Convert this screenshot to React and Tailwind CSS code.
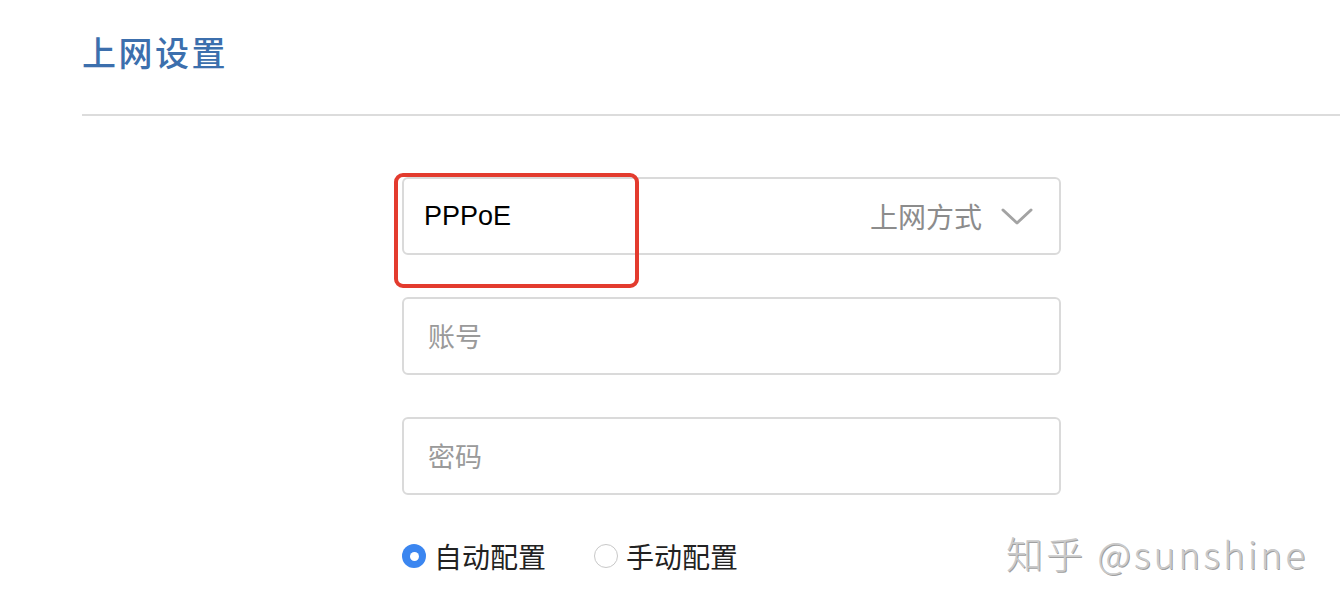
import React from "react";

const Field = ({ children }) => (
  <div className="h-[78px] w-[659px] rounded-[6px] border-2 border-[#dadada] bg-white flex items-center px-[20px]">
    {children}
  </div>
);

const App = () => {
  return (
    <div className="relative w-[1340px] h-[604px] overflow-hidden bg-white font-['Liberation_Sans','Noto_Sans_CJK_SC',sans-serif]">
      <div className="pl-[82px] pt-[28px] h-[114px]">
        <h1 className="text-[34px] leading-[48px] text-[#3c6fad] font-['Noto_Sans_CJK_SC',sans-serif] font-medium tracking-[2.5px]">
          上网设置
        </h1>
      </div>
      <div className="ml-[82px] h-[2px] bg-[#dcdcdc]" />

      <div className="ml-[402px] mt-[61px] flex flex-col gap-[42px]">
        <div className="relative">
          <Field>
            <span className="text-[27px] text-black font-['Liberation_Sans',sans-serif]">PPPoE</span>
            <span className="ml-auto text-[28px] text-[#8c8c8c] font-['Noto_Sans_CJK_SC',sans-serif]">
              上网方式
            </span>
            <svg className="ml-[18px] mr-[5px]" width="34" height="22" viewBox="0 0 34 22" fill="none">
              <path d="M3 5 L17 18 L31 5" stroke="#a3a3a3" strokeWidth="3" strokeLinecap="round" strokeLinejoin="round" />
            </svg>
          </Field>
          <div className="absolute left-[-8px] top-[-4px] w-[245px] h-[115px] rounded-[9px] border-[4px] border-[#e33b2e]" />
        </div>
        <Field>
          <span className="text-[27px] text-[#9a9a9a] font-['Noto_Sans_CJK_SC',sans-serif] ml-[4px]">账号</span>
        </Field>
        <Field>
          <span className="text-[27px] text-[#9a9a9a] font-['Noto_Sans_CJK_SC',sans-serif] ml-[4px]">密码</span>
        </Field>
      </div>

      <div className="ml-[402px] mt-[40px] flex items-center font-['Noto_Sans_CJK_SC',sans-serif] text-[28px] text-[#222]">
        <span className="w-[24px] h-[24px] rounded-full bg-[#3b86f0] flex items-center justify-center">
          <span className="w-[9px] h-[9px] rounded-full bg-white" />
        </span>
        <span className="ml-[8px]">自动配置</span>
        <span className="ml-[48px] w-[24px] h-[24px] rounded-full border border-[#c8c8c8] bg-white" />
        <span className="ml-[8px]">手动配置</span>
      </div>

      <div className="absolute left-[1006px] top-[526px] text-[37px] text-[#cacaca] font-['Noto_Sans_CJK_SC',sans-serif] font-light [text-shadow:1px_1px_0_#a0a0a0] tracking-[3px]">
        知乎 @sunshine
      </div>
    </div>
  );
};

export default App;
